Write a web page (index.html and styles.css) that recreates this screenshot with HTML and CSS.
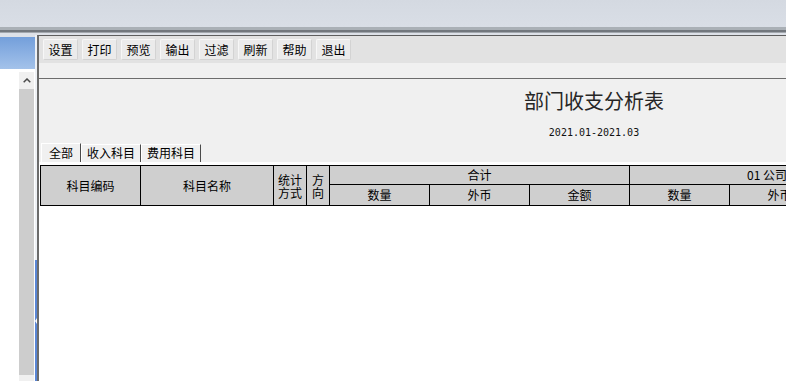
FILE: index.html
```html
<!DOCTYPE html>
<html lang="zh-CN">
<head>
  <meta charset="UTF-8" />
  <title>部门收支分析表</title>
  <link rel="stylesheet" href="styles.css">
</head>
<body>

  <div class="topbar"></div>
  <div class="topsep"></div>

  <div class="workspace">
    <aside class="sidebar">
      <div class="side-head"></div>
      <div class="side-body">
        <div class="scrollbar">
          <div class="sb-up">
            <svg width="8" height="5" viewBox="0 0 8 5"><path d="M0.7 4.3 L4 1 L7.3 4.3" fill="none" stroke="#4a4a4a" stroke-width="1.5"/></svg>
          </div>
          <div class="sb-track"></div>
          <div class="sb-down"></div>
        </div>
      </div>
    </aside>

    <div class="splitter">
      <div class="splitter-top"></div>
      <div class="splitter-grip"><span class="grip-arrow"></span></div>
    </div>

    <main class="main">
      <!-- toolbar -->
      <div class="toolbar">
        <button class="tool-btn">设置</button>
        <button class="tool-btn">打印</button>
        <button class="tool-btn">预览</button>
        <button class="tool-btn">输出</button>
        <button class="tool-btn">过滤</button>
        <button class="tool-btn">刷新</button>
        <button class="tool-btn">帮助</button>
        <button class="tool-btn">退出</button>
      </div>
      <div class="toolbar-gap"></div>

      <!-- report header -->
      <div class="report-head">
        <div class="report-title">部门收支分析表</div>
        <div class="report-date">2021.01-2021.03</div>
      </div>

      <div class="tabs">
        <div class="tab active">全部</div>
        <div class="tab">收入科目</div>
        <div class="tab">费用科目</div>
      </div>

      <!-- grid -->
      <div class="grid">
        <table class="report-table">
          <colgroup>
            <col class="c-code">
            <col class="c-name">
            <col class="c-stat">
            <col class="c-dir">
            <col class="c-num"><col class="c-num"><col class="c-num">
            <col class="c-num"><col class="c-num"><col class="c-num">
          </colgroup>
          <tr class="r1">
            <th rowspan="2">科目编码</th>
            <th rowspan="2">科目名称</th>
            <th rowspan="2" class="two-line"><span>统计</span><span>方式</span></th>
            <th rowspan="2" class="two-line"><span>方</span><span>向</span></th>
            <th colspan="3">合计</th>
            <th colspan="3" class="dept">01 公司</th>
          </tr>
          <tr class="r2">
            <th>数量</th>
            <th>外币</th>
            <th>金额</th>
            <th>数量</th>
            <th>外币</th>
            <th>金额</th>
          </tr>
        </table>
      </div>
    </main>
  </div>

</body>
</html>
```

FILE: styles.css
```css
* {
  box-sizing: border-box;
}

body {
  margin: 0;
  height: 381px;
  overflow: hidden;
  display: flex;
  flex-direction: column;
  font-family: "Noto Sans CJK SC", sans-serif;
  font-size: 12px;
  color: #000;
  background: #d6dbe3;
}

.topbar {
  height: 27px;
  background: linear-gradient(#d4d9e1, #d9dee6);
}

.topsep {
  height: 8px;
  background: linear-gradient(
    #aab0b6 0 3px,
    #72777d 3px 5px,
    #a2a7ad 5px 6px,
    #dde1e8 6px 8px
  );
}

.workspace {
  flex: 1;
  display: flex;
  min-height: 0;
}

/* left panel */
.sidebar {
  width: 35px;
  display: flex;
  flex-direction: column;
  background: #fff;
}

.side-head {
  height: 34px;
  border-top: 2px solid #dde1e8;
  background: linear-gradient(#739fdb, #a3c2ea);
}

.side-body {
  flex: 1;
  display: flex;
  padding: 3px 1px 0 19px;
}

.scrollbar {
  width: 15px;
  display: flex;
  flex-direction: column;
}

.sb-up {
  height: 17px;
  background: #f0f0f0;
  display: flex;
  align-items: center;
  justify-content: center;
  padding-bottom: 1px;
}

.sb-up svg {
  display: block;
}

.sb-track {
  flex: 1;
  background: #cdcdcd;
}

.sb-down {
  height: 6px;
  background: #f0f0f0;
}

.splitter {
  width: 2px;
  display: flex;
  flex-direction: column;
}

.splitter-top {
  height: 225px;
  background: #eef1f5;
}

.splitter-grip {
  flex: 1;
  background: #5a86d5;
  display: flex;
  align-items: center;
  justify-content: center;
}

.grip-arrow {
  width: 0;
  height: 0;
  border-top: 3px solid transparent;
  border-bottom: 3px solid transparent;
  border-right: 2px solid #fff;
}

/* main panel */
.main {
  flex: 1;
  min-width: 0;
  display: flex;
  flex-direction: column;
  overflow: hidden;
  border-top: 1px solid #5e5e5e;
  border-left: 2px solid #6b6b6b;
  background: #f0f0f0;
}

.toolbar {
  height: 27px;
  flex-shrink: 0;
  display: flex;
  align-items: flex-start;
  gap: 4px;
  padding: 3px 0 0 4px;
  background: #e2e2e2;
}

.tool-btn {
  width: 35px;
  height: 21px;
  padding: 0;
  margin: 0;
  font: inherit;
  line-height: 19px;
  color: #000;
  text-align: center;
  background: #ebebeb;
  border: 1px solid;
  border-color: #f7f7f7 #d3d3d3 #d3d3d3 #f7f7f7;
  border-radius: 2px;
}

.toolbar-gap {
  height: 16px;
  flex-shrink: 0;
  border-bottom: 1px solid #6c6c6c;
}

.report-head {
  width: 1110px;
  flex-shrink: 0;
  text-align: center;
  padding-top: 10px;
}

.report-title {
  font-size: 20px;
  line-height: 24px;
  color: #262626;
}

.report-date {
  margin-top: 14px;
  font-family: "DejaVu Sans Mono", monospace;
  font-size: 10px;
  line-height: 12px;
  color: #111;
}

.tabs {
  height: 19px;
  flex-shrink: 0;
  margin-top: 4px;
  display: flex;
  align-items: flex-end;
  padding-left: 2px;
}

.tab {
  height: 18px;
  line-height: 16px;
  padding: 0 5px;
  border-top: 1px solid #fff;
  border-left: 1px solid #fff;
  border-right: 1px solid #4a4a4a;
}

.tab.active {
  height: 19px;
  line-height: 17px;
  padding: 0 7px;
}

.grid {
  flex: 1;
  background: #fff;
  padding: 3px 0 0 1px;
}

.report-table {
  width: 890px;
  border-collapse: collapse;
  table-layout: fixed;
}

.c-code { width: 100px; }
.c-name { width: 133px; }
.c-stat { width: 33px; }
.c-dir  { width: 23px; }
.c-num  { width: 100px; }

.report-table th {
  padding: 0;
  font-weight: normal;
  text-align: center;
  vertical-align: middle;
  white-space: nowrap;
  background: #cfcfcf;
  border: 1px solid #000;
  line-height: 16px;
}

.report-table .r1 th {
  height: 19px;
}

.report-table .r2 th {
  height: 21px;
}

.report-table th.two-line span {
  display: block;
  height: 13px;
  line-height: 13px;
}

.report-table th.dept {
  text-align: left;
  padding-left: 117px;
}
```
